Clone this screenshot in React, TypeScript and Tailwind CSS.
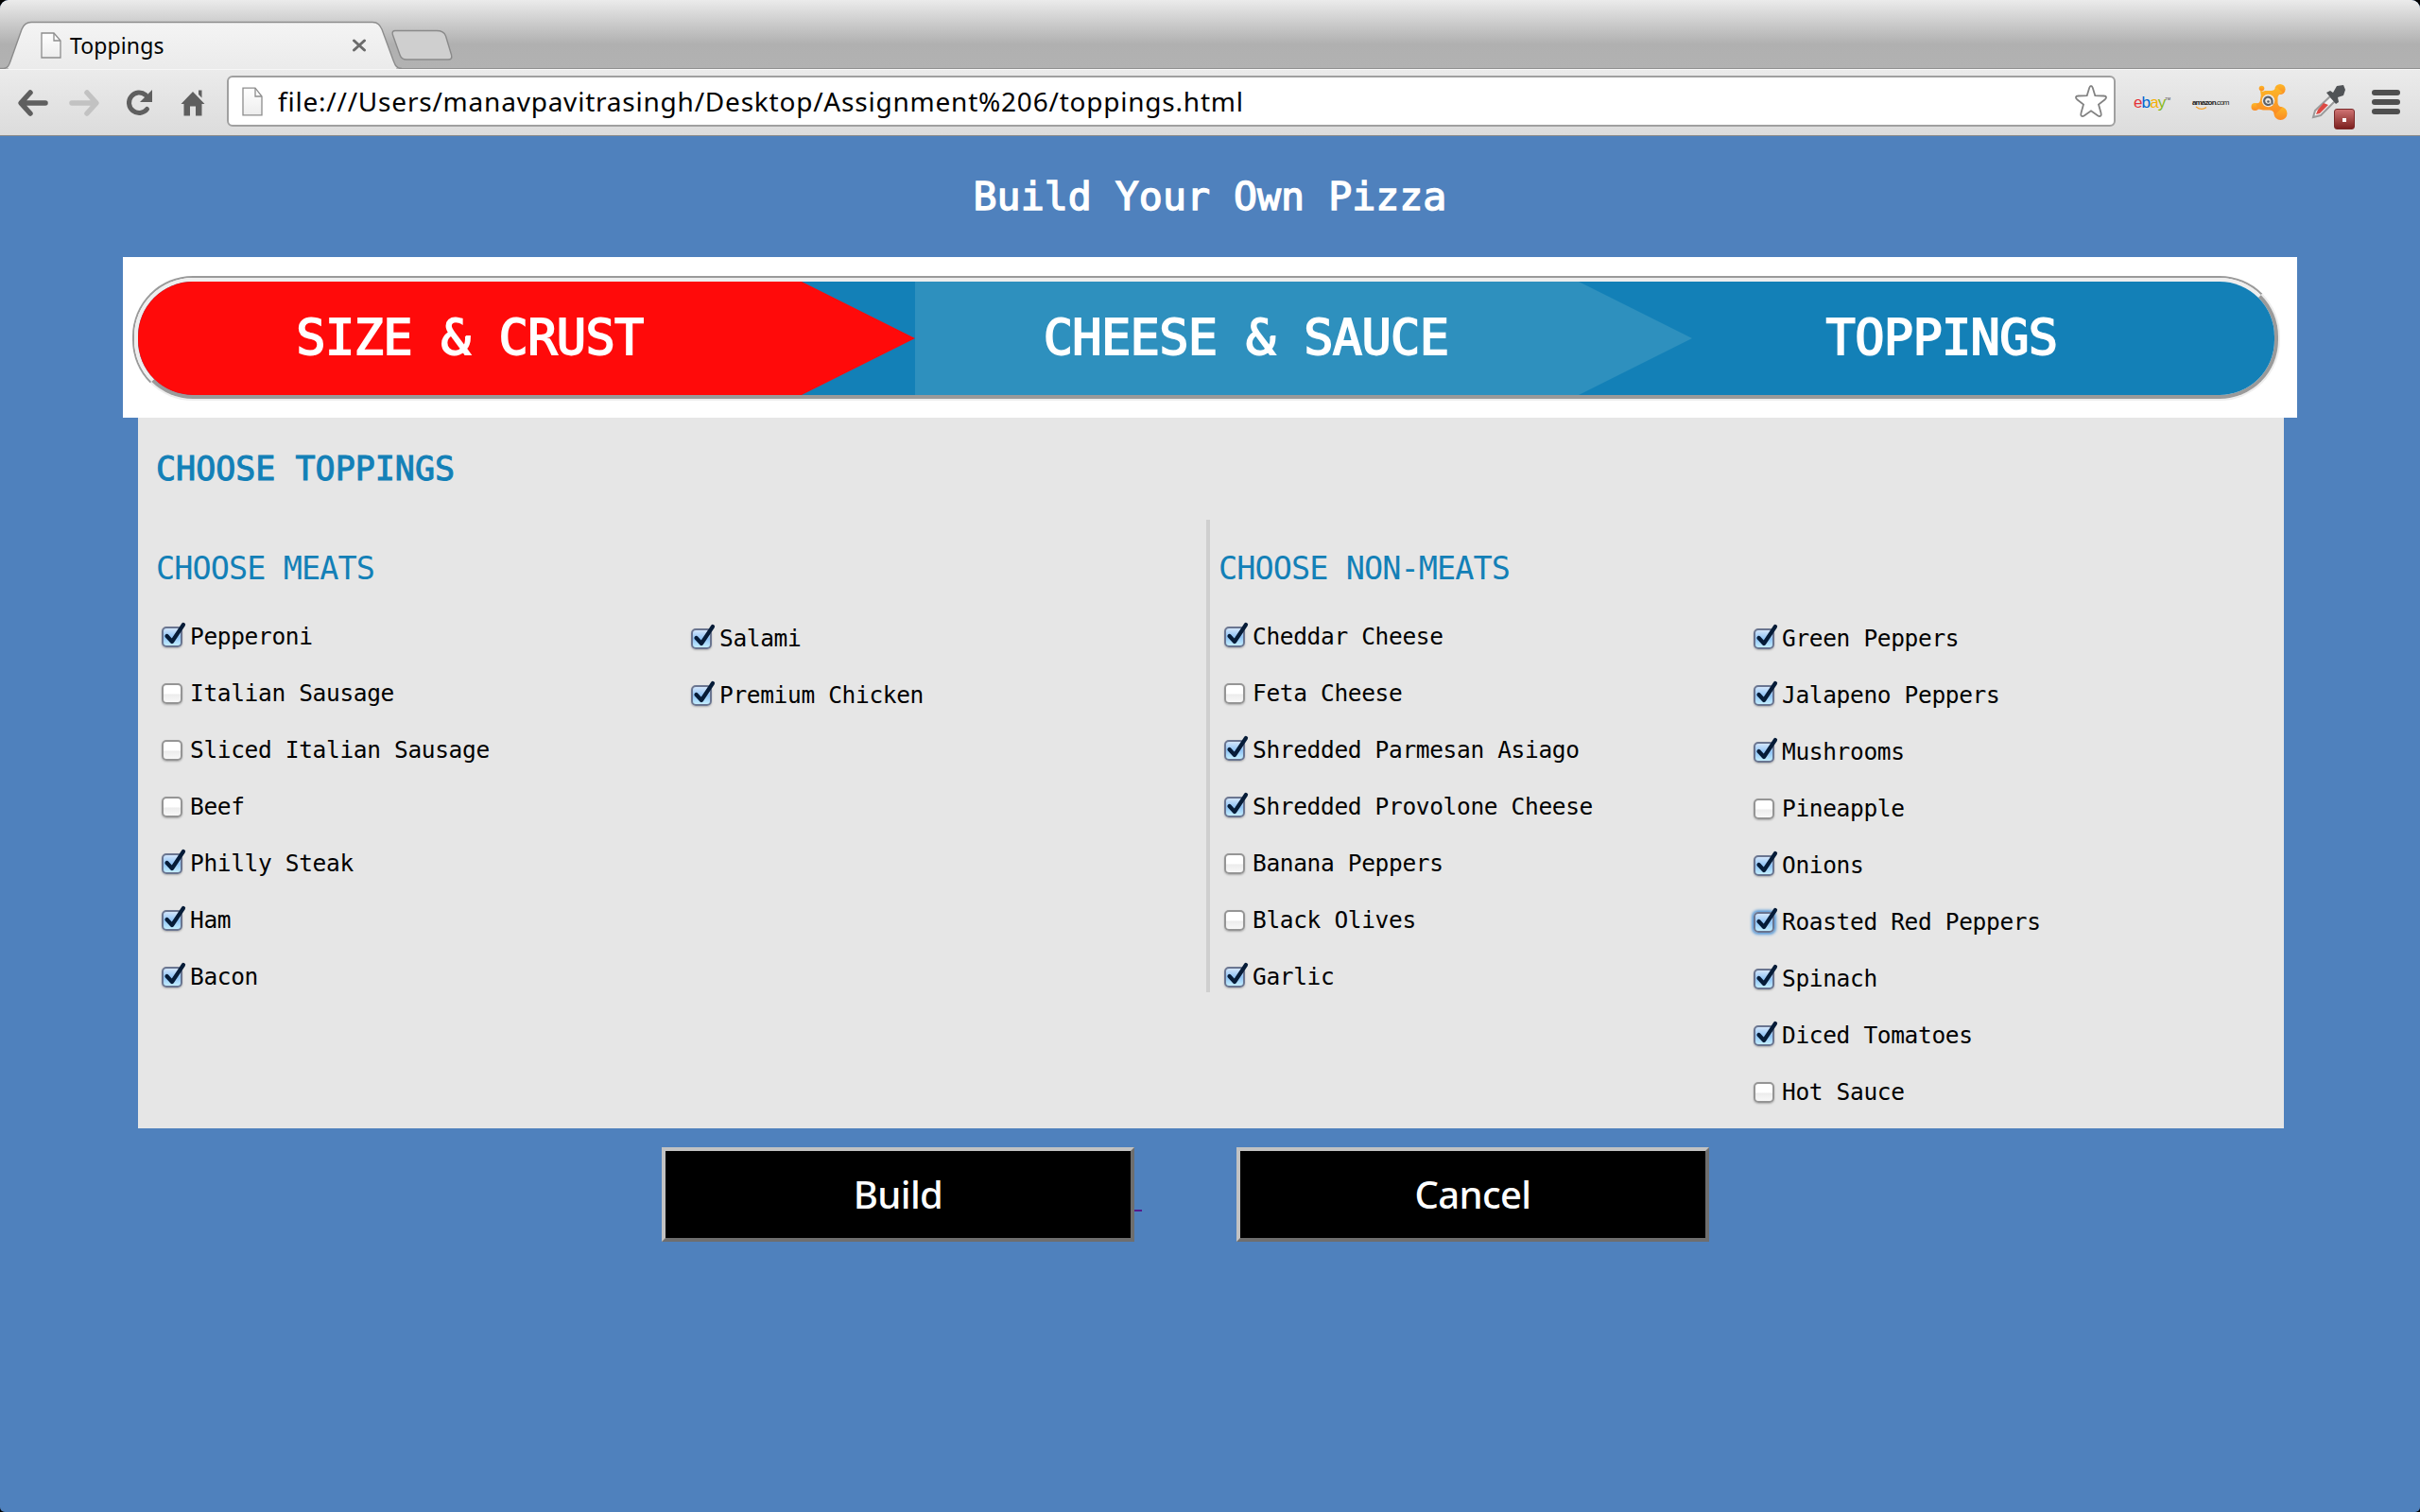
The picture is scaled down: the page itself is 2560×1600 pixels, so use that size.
import React from "react";

const MONO = "font-['DejaVu_Sans_Mono',monospace]";
const SANS = "font-['Noto_Sans',sans-serif]";

type Item = { label: string; on?: boolean; focus?: boolean };

const meatsA: Item[] = [
  { label: "Pepperoni", on: true },
  { label: "Italian Sausage" },
  { label: "Sliced Italian Sausage" },
  { label: "Beef" },
  { label: "Philly Steak", on: true },
  { label: "Ham", on: true },
  { label: "Bacon", on: true },
];
const meatsB: Item[] = [
  { label: "Salami", on: true },
  { label: "Premium Chicken", on: true },
];
const otherA: Item[] = [
  { label: "Cheddar Cheese", on: true },
  { label: "Feta Cheese" },
  { label: "Shredded Parmesan Asiago", on: true },
  { label: "Shredded Provolone Cheese", on: true },
  { label: "Banana Peppers" },
  { label: "Black Olives" },
  { label: "Garlic", on: true },
];
const otherB: Item[] = [
  { label: "Green Peppers", on: true },
  { label: "Jalapeno Peppers", on: true },
  { label: "Mushrooms", on: true },
  { label: "Pineapple" },
  { label: "Onions", on: true },
  { label: "Roasted Red Peppers", on: true, focus: true },
  { label: "Spinach", on: true },
  { label: "Diced Tomatoes", on: true },
  { label: "Hot Sauce" },
];

function Check({ on, focus }: Item) {
  const base = "relative block size-[22px] rounded-[5px] border-2 shrink-0 ";
  const look = on
    ? "border-[#6a7590] bg-linear-to-b from-[#d3e6fb] via-[#8fc3f5] to-[#c4eefe] "
    : "border-[#959595] bg-linear-to-b from-white from-50% via-[#ececec] via-55% to-[#f8f8f8] ";
  const ring = focus
    ? "shadow-[0_0_3px_2px_#5b9bd8]"
    : "shadow-[0_1px_2px_rgba(0,0,0,0.25)]";
  return (
    <span className={base + look + ring}>
      {on && (
        <svg className="absolute -top-[8px] -left-[2px] overflow-visible" width="28" height="28" viewBox="0 0 28 28">
          <path d="M5.5 16 L11 22 L23 4" fill="none" stroke="#061c38" strokeWidth="4.2" strokeLinecap="round" strokeLinejoin="round" />
        </svg>
      )}
    </span>
  );
}

function List({ items, className = "" }: { items: Item[]; className?: string }) {
  return (
    <ul className={"w-[560px] shrink-0 " + className}>
      {items.map((it) => (
        <li key={it.label} className="flex h-[60px] items-center">
          <Check {...it} />
          <span className="ml-[8px] text-[24.500px] leading-[60px] tracking-[-0.350px] whitespace-pre text-black">{it.label}</span>
        </li>
      ))}
    </ul>
  );
}

function PageIcon({ w, h }: { w: number; h: number }) {
  return (
    <svg width={w} height={h} viewBox="0 0 22 28" preserveAspectRatio="none" className="block shrink-0">
      <defs>
        <linearGradient id="pg" x1="0" y1="0" x2="0" y2="1">
          <stop offset="0" stopColor="#fff" />
          <stop offset="1" stopColor="#ededed" />
        </linearGradient>
      </defs>
      <path d="M1 1 H14 L21 9 V27 H1 Z" fill="url(#pg)" stroke="#8d8d8d" strokeWidth="1.3" />
      <path d="M14 1 V9 H21" fill="none" stroke="#8d8d8d" strokeWidth="1.3" />
    </svg>
  );
}

function TabStrip() {
  return (
    <div className="relative flex h-[73px] items-start border-b border-[#909090] bg-linear-to-b from-[#ebebeb] via-[#b0b0b0] via-65% to-[#b2b2b2]">
      <svg className="absolute top-0 left-0" width="500" height="73" viewBox="0 0 500 73">
        <defs>
          <linearGradient id="tab" x1="0" y1="0" x2="0" y2="1">
            <stop offset="0" stopColor="#f4f4f4" />
            <stop offset="1" stopColor="#ebebeb" />
          </linearGradient>
        </defs>
        <path d="M0 72.5 H4 C9 72 10 68 12 62 L23 31 C25 26 28 23.5 33 23.5 H394 C400 23.5 402 27 404 31 L415 61 C418 69 419 72.5 425 72.5" fill="url(#tab)" stroke="#8c8c8c" strokeWidth="1.4" />
        <rect x="9" y="71" width="410" height="2" fill="#ebebeb" />
        <path d="M418 32.5 H462 C467 32.5 470 34 471.500 38 L477.500 58 C478.500 62 477 63 474 63 H430 C426 63 424 61 423 58 L415.500 37 C414.500 34 415.500 32.5 418 32.5 Z" fill="#cfcfcf" stroke="#8a8a8a" strokeWidth="1.4" />
      </svg>
      <div className="relative flex h-[72px] w-[420px] items-center pt-[23px] pl-[43px]">
        <PageIcon w={22} h={28} />
        <span className={SANS + " ml-[9px] text-[23px] leading-[30px] tracking-[0.100px] text-black"}>Toppings</span>
        <svg className="absolute top-[41px] left-[372px]" width="16" height="14" viewBox="0 0 16 14">
          <path d="M2.500 2 L13.500 12 M13.500 2 L2.500 12" stroke="#6b6b6b" strokeWidth="3" strokeLinecap="round" />
        </svg>
      </div>
    </div>
  );
}

function NavIcons() {
  return (
    <div className="flex w-[240px] shrink-0 items-center pl-[18px]">
      <svg width="33" height="30" viewBox="0 0 33 30" className="mr-[22px]">
        <path d="M30 15 H5 M14 4 L4 15 L14 26" fill="none" stroke="#5f5f5f" strokeWidth="5.500" strokeLinecap="round" strokeLinejoin="round" />
      </svg>
      <svg width="33" height="30" viewBox="0 0 33 30" className="mr-[27px]">
        <path d="M3 15 H28 M19 4 L29 15 L19 26" fill="none" stroke="#c2c2c2" strokeWidth="5.500" strokeLinecap="round" strokeLinejoin="round" />
      </svg>
      <svg width="30" height="30" viewBox="0 0 30 30" className="mr-[28px]">
        <path d="M22.500 21.500 A10.700 10.700 0 1 1 21 6.500" fill="none" stroke="#5f5f5f" strokeWidth="5" strokeLinecap="round" />
        <path d="M28 1 V14 H15 Z" fill="#5f5f5f" />
      </svg>
      <svg width="26" height="30" viewBox="0 0 26 30">
        <path d="M13 3 L25.500 16 H22.500 V28.500 H16 V18.500 H10 V28.500 H3.500 V16 H0.500 Z M19 1.500 H22.500 V9.500 L19 6 Z" fill="#5f5f5f" />
      </svg>
    </div>
  );
}

function Extensions() {
  return (
    <div className="flex items-center">
      <div className="ml-[19px] flex w-[42px] items-center text-[17px] leading-[20px] tracking-[-0.900px] font-['Liberation_Sans',sans-serif]">
        <span className="text-[#e53238]">e</span>
        <span className="text-[#0064d2]">b</span>
        <span className="text-[#f5af02]">a</span>
        <span className="text-[#86b817]">y</span>
        <span className="-mt-[8px] text-[4px] tracking-normal text-[#333]">TM</span>
      </div>
      <div className="relative ml-[20px] flex w-[38px] text-[8px] leading-[10px] tracking-[-0.850px] text-[#222] font-['Liberation_Sans',sans-serif]">
        <b>amazon</b>
        <span>.com</span>
        <svg className="absolute top-[8px] left-[3px]" width="14" height="5" viewBox="0 0 14 5">
          <path d="M1 1 Q7 5.500 12 1.500" fill="none" stroke="#f7a128" strokeWidth="1.300" />
        </svg>
      </div>
      <svg width="40" height="40" viewBox="0 0 40 40" className="-mt-[1px] ml-[24px]">
        <defs>
          <linearGradient id="av" x1="0" y1="0" x2="0" y2="1">
            <stop offset="0" stopColor="#fdb827" />
            <stop offset="1" stopColor="#fb8a24" />
          </linearGradient>
        </defs>
        <g fill="url(#av)">
          <circle cx="11.500" cy="5.500" r="2.800" />
          <circle cx="31" cy="6.500" r="5.600" />
          <circle cx="4.500" cy="25" r="4" />
          <circle cx="31.500" cy="32" r="7" />
          <path d="M10 7.500 Q12.500 9.500 15 8 H22 Q26 7.500 27 4 L34 10 Q29 11.500 28.500 15 V21 Q29 25 33.500 25.500 L25 34 Q25 29 20 28.500 H13 Q9.500 27.500 7.500 27.500 L5.500 21.500 Q9.500 21.500 10 18 Q11.500 13 10 7.500 Z" />
        </g>
        <circle cx="18.500" cy="18.500" r="6.800" fill="#ebe8e2" />
        <path d="M21 22 A4.200 4.200 0 1 1 22.500 18.500 V22.500" fill="none" stroke="#5b6168" strokeWidth="2.200" />
        <circle cx="18.500" cy="19.500" r="1.300" fill="#5b6168" />
      </svg>
      <div className="relative ml-[23px] size-[38px]">
        <svg width="38" height="38" viewBox="0 0 38 38" className="-mt-[1px]">
          <path d="M3 35 L5 28 L21 13 L26 18 L11 33 Z" fill="#f2f2f2" stroke="#9b9b9b" strokeWidth="2" />
          <path d="M6 32 L8 27 L14 20 L19 22 L10 31 Z" fill="#dc4a44" />
          <path d="M17 9 L21 7 L24 9 L28 2 L35 1 L37 6 L35 12 L29 14 L30 19 L27 21 Z" fill="#505356" />
        </svg>
        <span className="absolute top-[25px] left-[25px] flex h-[22px] w-[22px] items-center justify-center rounded-[3px] border border-[#7b2a2a] bg-linear-to-b from-[#cf7373] to-[#7c1f1f]">
          <i className="mt-[2px] block size-[4px] bg-white" />
        </span>
      </div>
      <div className="-mt-[2px] ml-[27px] flex flex-col gap-[4px]">
        <i className="block h-[6px] w-[30px] rounded-full bg-[#4f4f4f]" />
        <i className="block h-[6px] w-[30px] rounded-full bg-[#4f4f4f]" />
        <i className="block h-[6px] w-[30px] rounded-full bg-[#4f4f4f]" />
      </div>
    </div>
  );
}

function Toolbar() {
  return (
    <div className="flex h-[71px] border-t border-b border-t-[#f7f7f7] border-b-[#8b8b8b] bg-linear-to-b from-[#ebebeb] to-[#dcdcdc]">
      <NavIcons />
      <div className="mt-[6px] flex h-[54px] w-[1998px] shrink-0 items-center rounded-[6px] border-2 border-[#a0a0a0] bg-white pl-[14px]">
        <PageIcon w={22} h={31} />
        <span className={SANS + " ml-[16px] text-[28px] leading-[40px] tracking-[0.780px] whitespace-pre text-black"}>
          file:///Users/manavpavitrasingh/Desktop/Assignment%206/toppings.html
        </span>
        <svg width="36" height="36" viewBox="0 0 36 36" className="mr-[6px] ml-auto">
          <path d="M18 1.800 C19 1.800 19.500 3 19.800 4 L22.300 12.200 L31.500 12.500 C34.500 12.700 35 14.500 32.500 16.500 L26 21.500 L28.500 30.500 C29.500 34 27.500 35 25 33.300 L18 28.300 L11 33.300 C8.500 35 6.500 34 7.500 30.500 L10 21.500 L3.500 16.500 C1 14.500 1.500 12.700 4.500 12.500 L13.700 12.200 L16.200 4 C16.500 3 17 1.800 18 1.800 Z" fill="#fff" stroke="#828282" strokeWidth="1.800" />
        </svg>
      </div>
      <Extensions />
    </div>
  );
}

function Steps() {
  const label = "text-[52px] leading-[118px] tracking-[-0.700px] text-white whitespace-pre [-webkit-text-stroke:1.8px_white]";
  return (
    <div className="mx-[130px] h-[170px] bg-white pt-[20px] pl-[10px]">
      <div className="h-[132px] w-[2272px] rounded-[64px] border-2 border-t-[#9a9a9a] border-r-[#eeeeee] border-b-[#eeeeee] border-l-[#9a9a9a]">
        <div className="h-[128px] rounded-[62px] border-4 border-t-[#eeeeee] border-r-[#9a9a9a] border-b-[#9a9a9a] border-l-[#eeeeee]">
          <div className="flex h-[120px] overflow-hidden rounded-[58px] bg-[#1380b7]">
            <div className="h-[120px] w-[822px] bg-[#ff0a0a] pr-[120px] text-center [clip-path:polygon(0_0,702px_0,100%_50%,702px_100%,0_100%)]">
              <span className={label}>SIZE &amp; CRUST</span>
            </div>
            <div className="h-[120px] w-[822px] bg-[#2e90be] pr-[122px] text-center [clip-path:polygon(0_0,702px_0,100%_50%,702px_100%,0_100%)]">
              <span className={label}>CHEESE &amp; SAUCE</span>
            </div>
            <div className="h-[120px] w-[616px] pr-[88px] text-center">
              <span className={label}>TOPPINGS</span>
            </div>
          </div>
        </div>
      </div>
    </div>
  );
}

function Half({ title, a, b }: { title: string; a: Item[]; b: Item[] }) {
  return (
    <>
      <h3 className="text-[33.500px] leading-[38px] tracking-[-0.920px] text-[#1380b7]">{title}</h3>
      <div className="mt-[23px] ml-[6px] flex items-start">
        <List items={a} />
        <List items={b} className="mt-[2px]" />
      </div>
    </>
  );
}

export default function App() {
  const btn =
    SANS +
    " flex h-[100px] w-[500px] items-center justify-center border-4 border-t-[#c2c2c2] border-r-[#6e6e6e] border-b-[#6e6e6e] border-l-[#c2c2c2] bg-black pb-[1px] text-[40px] leading-[40px] font-medium tracking-[-0.600px] text-white";
  return (
    <div className="h-[1600px] w-[2560px] bg-black">
      <div className="h-[1600px] overflow-hidden rounded-t-[9px] rounded-b-[5px] bg-[#4f81bd]">
        <TabStrip />
        <Toolbar />
        <main className={MONO}>
          <h1 className="h-[128px] pt-[39px] text-center text-[41.600px] leading-[50px] text-white [-webkit-text-stroke:1.4px_white]">
            Build Your Own Pizza
          </h1>
          <Steps />
          <section className="mr-[144px] ml-[146px] h-[752px] bg-[#e6e6e6] pt-[34px]">
            <h2 className="ml-[19px] text-[35px] leading-[40px] text-[#1380b7] [-webkit-text-stroke:1px_#1380b7]">CHOOSE TOPPINGS</h2>
            <div className="mt-[34px] flex items-start">
              <div className="w-[1130px] pt-[33px] pl-[19px]">
                <Half title="CHOOSE MEATS" a={meatsA} b={meatsB} />
              </div>
              <div className="h-[500px] w-[1136px] border-l-4 border-[#cfcfcf] pt-[33px] pl-[9px]">
                <Half title="CHOOSE NON-MEATS" a={otherA} b={otherB} />
              </div>
            </div>
          </section>
          <div className="mt-[20px] flex pl-[700px]">
            <button className={btn}>Build</button>
            <i className="mt-[66px] mr-[100px] block h-[2px] w-[8px] bg-[#551a8b]" />
            <button className={btn}>Cancel</button>
          </div>
        </main>
      </div>
    </div>
  );
}
